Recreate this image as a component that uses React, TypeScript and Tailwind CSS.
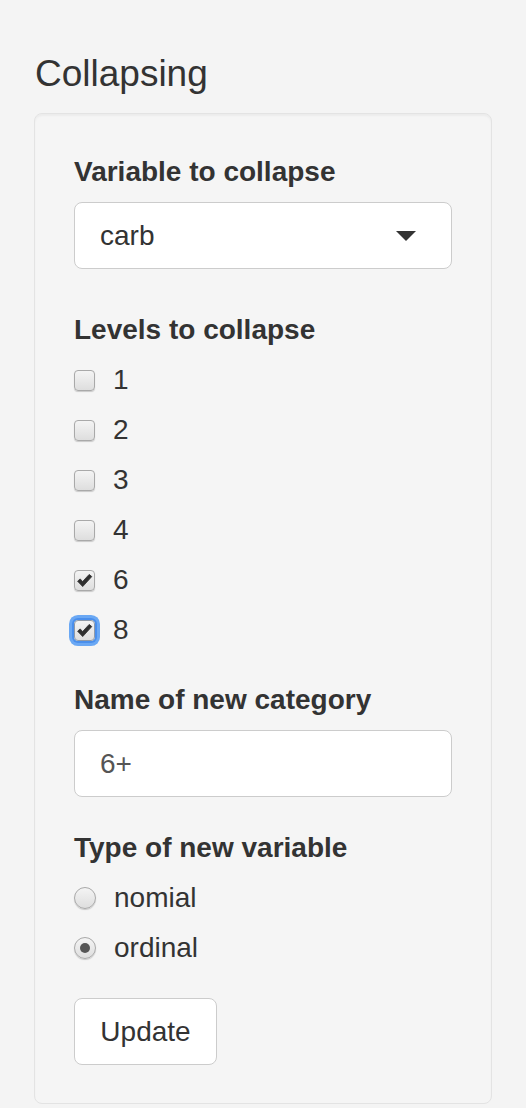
import React from "react";

function Check() {
  return (
    <svg viewBox="0 0 21 21" className="absolute left-[-1px] top-[-1px] h-[21px] w-[21px]">
      <path d="M3.6 11.2 L6.2 8.9 L8.6 11.6 L15.2 4.4 L17.8 6.6 L8.7 16.6 Z" fill="#2f2f2f" strokeLinejoin="round" stroke="#2f2f2f" strokeWidth="0.8" />
    </svg>
  );
}

function CheckRow({ label, checked, focused }: { label: string; checked?: boolean; focused?: boolean }) {
  return (
    <div className="flex h-[40px] items-center">
      <span
        className={
          focused
            ? "relative block h-[21px] w-[21px] rounded-[4px] border border-[#8f9aa8] bg-gradient-to-b from-[#f4f4f4] to-[#dedede] shadow-[0_0_0_2px_#4a8fec,0_0_0_5px_#6aa8f4]"
            : "relative block h-[21px] w-[21px] rounded-[4px] border border-[#a9a9a9] bg-gradient-to-b from-[#f4f4f4] to-[#dedede] shadow-[0_1px_1px_rgba(0,0,0,0.18)]"
        }
      >
        {checked && <Check />}
      </span>
      <span className="ml-[18px] text-[28px] leading-[40px]">{label}</span>
    </div>
  );
}

function RadioRow({ label, checked }: { label: string; checked?: boolean }) {
  return (
    <div className="flex h-[40px] items-center">
      <span className="flex h-[22px] w-[22px] items-center justify-center rounded-full border border-[#a9a9a9] bg-gradient-to-b from-[#f4f4f4] to-[#dedede] shadow-[0_1px_1px_rgba(0,0,0,0.18)]">
        {checked && <span className="block h-[10px] w-[10px] rounded-full bg-[#555]" />}
      </span>
      <span className="ml-[18px] text-[28px] leading-[40px]">{label}</span>
    </div>
  );
}

export default function App() {
  return (
    <div className="min-h-[1108px] bg-[#f4f4f4] px-[34px] pt-[54px] font-['Liberation_Sans',Arial,sans-serif] text-[#333]">
      <h4 className="ml-[1px] text-[37px] font-normal leading-[40px]">Collapsing</h4>
      <div className="mt-[19px] rounded-[8px] border border-[#e3e3e3] bg-[#f5f5f5] px-[39px] py-[38px] shadow-[inset_0_2px_2px_rgba(0,0,0,0.04)]">
        <div className="text-[28px] font-bold leading-[40px]">Variable to collapse</div>
        <div className="mt-[10px] flex h-[67px] items-center justify-between rounded-[8px] border border-[#ccc] bg-white pl-[25px] pr-[35px]">
          <span className="text-[28px] leading-[40px] text-[#333]">carb</span>
          <svg width="20" height="10" viewBox="0 0 20 10">
            <polygon points="0,0 20,0 10,10" fill="#333" />
          </svg>
        </div>

        <div className="mt-[41px] text-[28px] font-bold leading-[40px]">Levels to collapse</div>
        <div className="mt-[10px] flex flex-col gap-[10px]">
          <CheckRow label="1" />
          <CheckRow label="2" />
          <CheckRow label="3" />
          <CheckRow label="4" />
          <CheckRow label="6" checked />
          <CheckRow label="8" checked focused />
        </div>

        <div className="mt-[30px] text-[28px] font-bold leading-[40px]">Name of new category</div>
        <div className="mt-[10px] flex h-[67px] items-center rounded-[8px] border border-[#ccc] bg-white pl-[25px]">
          <span className="text-[28px] leading-[40px] text-[#555]">6+</span>
        </div>

        <div className="mt-[31px] text-[28px] font-bold leading-[40px]">Type of new variable</div>
        <div className="mt-[10px] flex flex-col gap-[10px]">
          <RadioRow label="nomial" />
          <RadioRow label="ordinal" checked />
        </div>

        <button className="mt-[30px] flex h-[67px] w-[143px] items-center justify-center rounded-[8px] border border-[#ccc] bg-white text-[28px] leading-[40px] text-[#333]">
          Update
        </button>
      </div>
    </div>
  );
}
